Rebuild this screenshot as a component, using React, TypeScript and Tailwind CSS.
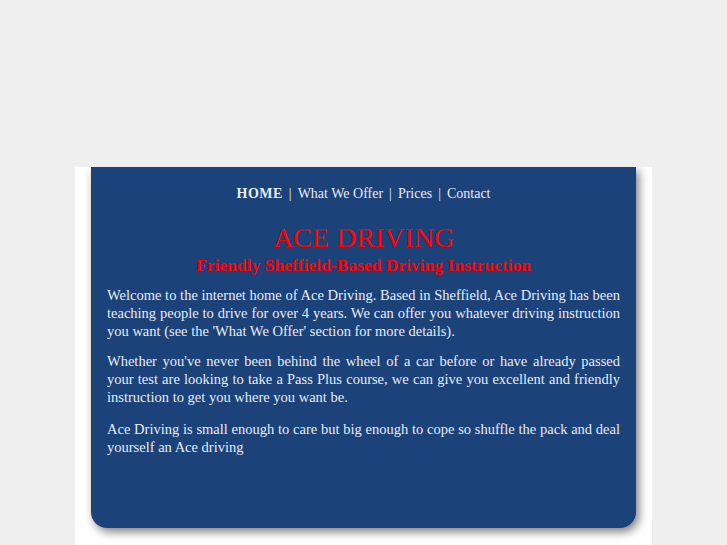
export default function App() {
  const serif = "font-['Palatino_Linotype','Book_Antiqua',Palatino,'Liberation_Serif',serif]"

  return (
    <div className={`min-h-[545px] bg-[#efefef] ${serif}`}>
      <div className="h-[167px]" />
      <div className="mx-auto w-[577px] overflow-hidden bg-white px-4 pb-10">
        <div className="h-[361px] rounded-b-[16px] bg-[#1b4279] px-4 pt-[18px] text-[#e9ebf2] shadow-[3px_4px_10px_rgba(0,0,0,0.5)]">
          <nav className="flex items-center justify-center gap-[6px] text-[14px] leading-[18px]">
            <a className="font-bold tracking-[0.5px]">HOME</a>
            <span>|</span>
            <a>What We Offer</a>
            <span>|</span>
            <a>Prices</a>
            <span>|</span>
            <a>Contact</a>
          </nav>

          <h1 className="mt-[19px] text-center text-[28px] leading-[32px] text-[#ff0000]">ACE DRIVING</h1>
          <h2 className="text-center text-[17.5px] font-bold leading-[22px] text-[#ff0000]">
            Friendly Sheffield-Based Driving Instruction
          </h2>

          <div className="mt-[10px] text-justify text-[14.5px] leading-[18px]">
            <p>
              Welcome to the internet home of Ace Driving. Based in Sheffield, Ace Driving has been teaching people to
              drive for over 4 years. We can offer you whatever driving instruction you want (see the 'What We Offer'
              section for more details).
            </p>
            <p className="mt-[12px]">
              Whether you've never been behind the wheel of a car before or have already passed your test are looking
              to take a Pass Plus course, we can give you excellent and friendly instruction to get you where you want
              be.
            </p>
            <p className="mt-[14px]">
              Ace Driving is small enough to care but big enough to cope so shuffle the pack and deal yourself an Ace
              driving
            </p>
          </div>
        </div>
      </div>
    </div>
  )
}
